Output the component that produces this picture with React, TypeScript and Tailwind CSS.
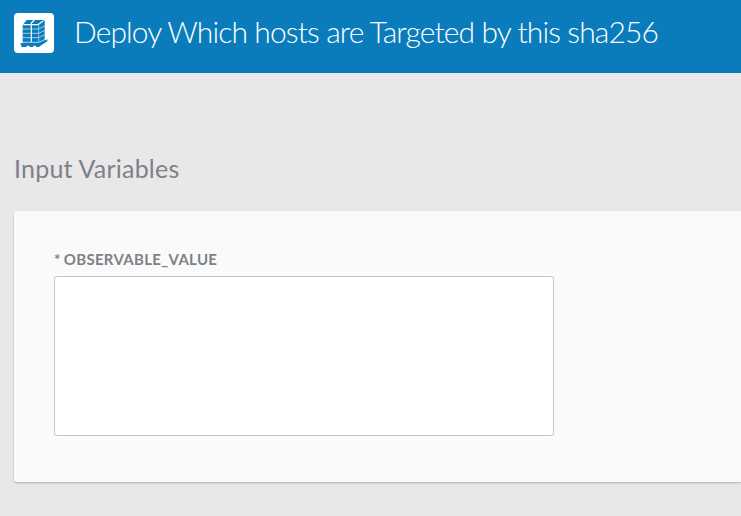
export default function App() {
  return (
    <div className="h-[516px] w-[741px] overflow-hidden bg-[#e8e8e8] font-['Lato',sans-serif]">
      <header className="flex h-[73px] bg-[#0a7cbc] pl-[14px] pt-[13px]">
        <div className="size-10 rounded-[4px] bg-white">
          <svg viewBox="18 18 120 120" className="size-10">
            <g fill="#0a7cbc">
              <path d="M56 39h49l5 3v60l-18 7H44V54z" />
              <path d="M38 108h54l26-11v6l-26 17h-8v-4h-8v4H64v-4h-8v4H40v-6h-2z" />
            </g>
            <g fill="none" stroke="#fff">
              <path strokeWidth="3.5" d="M46 53h22M72 53h18l15-11M79 39L70 48v57" />
              <path strokeWidth="1.5" d="M92 54v50" />
              <path strokeWidth="1.8" d="M44 66h48l18-9M44 79h48l18-9M44 92h48l18-9" />
              <path strokeWidth="2" d="M40 106h52l22-10" />
            </g>
          </svg>
        </div>
        <h1 className="ml-5 whitespace-nowrap text-[30px] font-light leading-[36px] tracking-[-0.89px] text-white">Deploy Which hosts are Targeted by this sha256</h1>
      </header>
      <main className="pl-[14px] pt-[79px]">
        <h2 className="text-[25px] leading-[32px] tracking-[0.22px] text-[#7e8188]">Input Variables</h2>
        <section className="mt-[27px] h-[271px] rounded-l-[3px] bg-[#fafafa] pl-10 pt-[38px] shadow-[0_1px_2px_rgba(0,0,0,0.25)]">
          <label className="block text-[15px] font-bold leading-[20px] tracking-[0.3px] text-[#7e8188] [word-spacing:-0.8px]">* OBSERVABLE_VALUE</label>
          <textarea className="mt-[7px] block h-[160px] w-[500px] resize-none rounded-[3px] border border-[#c4c4c4] bg-white" />
        </section>
      </main>
    </div>
  );
}
